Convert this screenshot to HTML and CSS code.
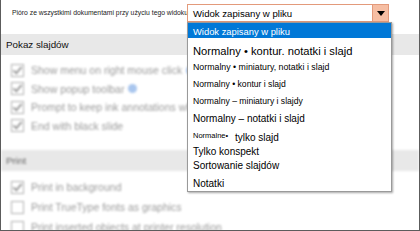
FILE: index.html
```html
<!DOCTYPE html>
<html lang="pl">
<head>
  <meta charset="UTF-8">
  <title>Opcje - widok</title>
  <link rel="stylesheet" href="styles.css">
</head>
<body>
  <div class="window">
    <div class="topbar">
      <span class="pen-label">Pióro ze wszystkimi dokumentami przy użyciu tego widoku</span>
      <div class="combo">
        <div class="combo-value">Widok zapisany w pliku</div>
        <div class="combo-btn">
          <svg width="8" height="5" viewBox="0 0 8 5"><path d="M0 0h8L4 5z" fill="#000"/></svg>
        </div>
        <ul class="combo-list">
          <li class="item selected">Widok zapisany w pliku</li>
          <li class="item big">Normalny • kontur. notatki i slajd</li>
          <li class="item tiny">Normalny • miniatury, notatki i slajd</li>
          <li class="item small">Normalny • kontur i slajd</li>
          <li class="item small">Normalny – miniatury i slajdy</li>
          <li class="item mid">Normalny – notatki i slajd</li>
          <li class="item mid"><span class="micro">Normalne•</span> tylko slajd</li>
          <li class="item mid short">Tylko konspekt</li>
          <li class="item mid short">Sortowanie slajdów</li>
          <li class="item mid last">Notatki</li>
        </ul>
      </div>
    </div>

    <div class="section-head">Pokaz slajdów</div>
    <div class="options">
      <div class="opt"><span class="box checked"></span>Show menu on right mouse click <span class="info"></span></div>
      <div class="opt"><span class="box checked"></span>Show popup toolbar <span class="info"></span></div>
      <div class="opt"><span class="box checked"></span>Prompt to keep ink annotations when exiting</div>
      <div class="opt"><span class="box checked"></span>End with black slide</div>
    </div>

    <div class="section-head fuzzy">Print</div>
    <div class="options print">
      <div class="opt"><span class="box checked"></span>Print in background</div>
      <div class="opt"><span class="box"></span>Print TrueType fonts as graphics</div>
      <div class="opt"><span class="box"></span>Print inserted objects at printer resolution</div>
    </div>
  </div>
</body>
</html>
```

FILE: styles.css
```css
body {
  margin: 0;
  font-family: "Liberation Sans", Arial, sans-serif;
  background: #ffffff;
  color: #000000;
}

.window {
  width: 420px;
  height: 231px;
  box-sizing: border-box;
  border: 1px solid #5c5c5c;
  border-top: none;
  overflow: hidden;
  background: #ffffff;
}

.topbar {
  height: 34px;
  display: flex;
  align-items: flex-start;
  padding-top: 4px;
  box-sizing: border-box;
}

.pen-label {
  font-size: 6.8px;
  color: #222;
  margin-left: 11px;
  margin-top: 5px;
  width: 175px;
  white-space: nowrap;
}

.combo {
  position: relative;
  display: flex;
  width: 202px;
  height: 18px;
  box-sizing: border-box;
  border: 1px solid #e39a7b;
}

.combo-value {
  flex: 1;
  font-size: 9.6px;
  line-height: 17px;
  padding-left: 5px;
}

.combo-btn {
  width: 15px;
  background: #f6bea3;
  border-left: 1px solid #e39a7b;
  display: flex;
  align-items: center;
  justify-content: center;
}

.combo-list {
  position: absolute;
  left: -1px;
  top: 17px;
  width: 203px;
  margin: 0;
  padding: 0;
  list-style: none;
  background: #ffffff;
  border: 1px solid #9a9a9a;
  box-shadow: 1px 1px 2px rgba(0, 0, 0, 0.35);
  z-index: 2;
}

.item {
  padding-left: 5px;
  white-space: nowrap;
  color: #000;
}

.item.selected {
  background: #0078d7;
  color: #ffffff;
  font-size: 9.4px;
  height: 15px;
  line-height: 17px;
}

.item.big {
  font-size: 11.2px;
  height: 22px;
  line-height: 27px;
}

.item.tiny {
  font-size: 8.8px;
  height: 16px;
  line-height: 14px;
}

.item.small {
  font-size: 8.6px;
  height: 17px;
  line-height: 17px;
}

.item.mid {
  font-size: 10px;
  height: 17px;
  line-height: 17px;
}

.item.short {
  height: 14px;
  line-height: 16px;
}

.item.last {
  height: 19px;
  line-height: 24px;
}

.micro {
  font-size: 7.5px;
  vertical-align: 3px;
  margin-right: 4px;
}

.section-head {
  height: 21px;
  line-height: 22px;
  background: #e8e8e8;
  padding-left: 5px;
  font-size: 9.8px;
  color: #111;
}

.section-head.fuzzy {
  filter: blur(1px);
  color: #666;
  margin-top: 15px;
}

.options {
  padding-top: 6px;
  filter: blur(1.2px);
}

.options.print {
  padding-top: 6px;
}

.opt {
  display: flex;
  align-items: center;
  height: 18.5px;
  padding-left: 10px;
  font-size: 10.5px;
  color: #9a9a9a;
  white-space: nowrap;
}

.options.print .opt {
  height: 20px;
}

.box {
  width: 11px;
  height: 11px;
  border: 1px solid #b0b0b0;
  margin-right: 7px;
  position: relative;
  flex: none;
}

.box.checked::after {
  content: "";
  position: absolute;
  left: 3px;
  top: 0px;
  width: 3px;
  height: 7px;
  border: solid #a0a0a0;
  border-width: 0 2px 2px 0;
  transform: rotate(40deg);
}

.info {
  display: inline-block;
  width: 9px;
  height: 9px;
  border-radius: 50%;
  background: #a9c6ee;
  margin-left: 4px;
}
```
